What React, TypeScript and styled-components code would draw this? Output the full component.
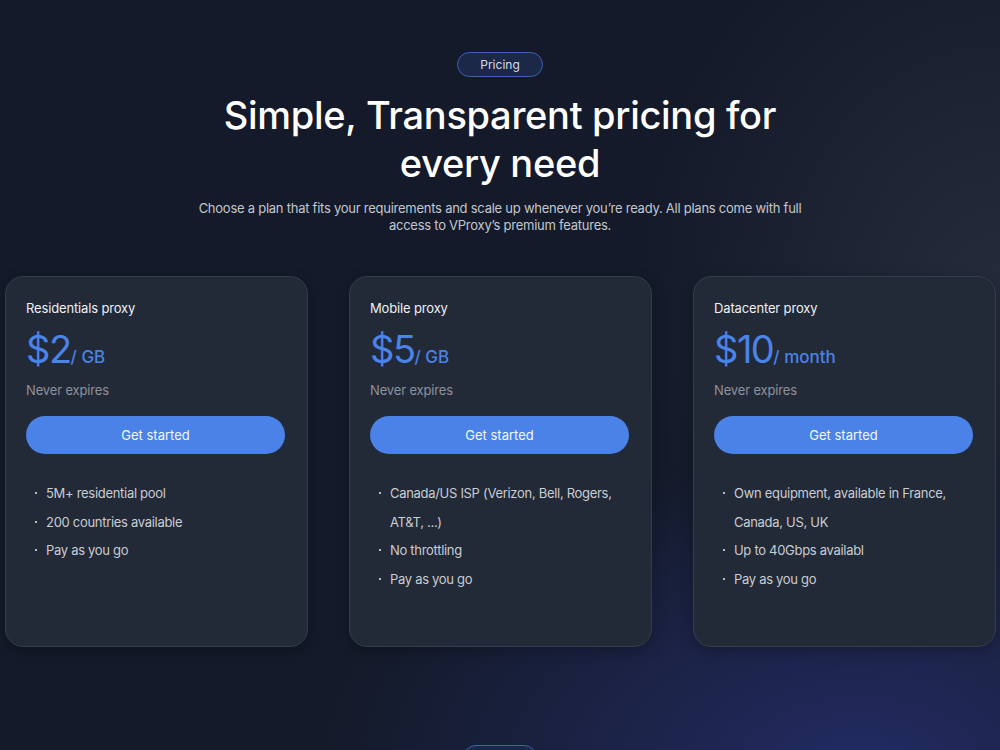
import styled, { createGlobalStyle } from "styled-components";

const GlobalStyle = createGlobalStyle`
  html, body {
    margin: 0;
    padding: 0;
    background: #141a29;
  }
  body {
    font-family: Inter, "Noto Sans", "Liberation Sans", sans-serif;
    -webkit-font-smoothing: antialiased;
  }
`;

type Plan = {
	name: string;
	price: string;
	unit: string;
	features: string[];
};

const plans: Plan[] = [
	{
		name: "Residentials proxy",
		price: "$2",
		unit: "/ GB",
		features: ["5M+ residential pool", "200 countries available", "Pay as you go"],
	},
	{
		name: "Mobile proxy",
		price: "$5",
		unit: "/ GB",
		features: [
			"Canada/US ISP (Verizon, Bell, Rogers, AT&T, ...)",
			"No throttling",
			"Pay as you go",
		],
	},
	{
		name: "Datacenter proxy",
		price: "$10",
		unit: "/ month",
		features: [
			"Own equipment, available in France, Canada, US, UK",
			"Up to 40Gbps availabl",
			"Pay as you go",
		],
	},
];

const Page = styled.div`
  min-height: 750px;
  overflow: hidden;
  background:
    radial-gradient(ellipse 540px 320px at 860px 770px, rgba(36, 46, 108, 0.85), transparent 100%),
    radial-gradient(ellipse 360px 420px at 1000px 300px, rgba(52, 58, 74, 0.55), transparent 100%),
    #141a29;
`;

const Section = styled.section`
  display: flex;
  flex-direction: column;
  align-items: center;
  padding-top: 52px;
`;

const Tag = styled.div`
  box-sizing: border-box;
  height: 25px;
  padding: 0 22px;
  display: flex;
  align-items: center;
  border: 1px solid #3f62b4;
  background: #1b2848;
  border-radius: 13px;
  color: #d5dbe8;
  font-size: 12px;
`;

const Heading = styled.h1`
  margin: 14px 0 0;
  width: 600px;
  text-align: center;
  color: #ffffff;
  font-size: 38px;
  font-weight: 500;
  line-height: 48px;
  letter-spacing: -0.3px;
`;

const Lead = styled.p`
  margin: 13px 0 0;
  width: 640px;
  text-align: center;
  color: #c3c7cf;
  font-size: 13px;
  line-height: 16.5px;
  letter-spacing: -0.25px;
`;

const Grid = styled.div`
  box-sizing: border-box;
  width: 100%;
  margin-top: 43px;
  padding: 0 4px 0 5px;
  display: grid;
  grid-template-columns: repeat(3, 1fr);
  gap: 41px;
`;

const Card = styled.div`
  box-sizing: border-box;
  height: 371px;
  padding: 22px 20px 0 20px;
  background: #222937;
  border: 1px solid #363d4a;
  border-radius: 18px;
  box-shadow: 0 4px 14px rgba(0, 0, 0, 0.25);
`;

const PlanName = styled.div`
  color: #eef0f4;
  font-size: 13px;
  line-height: 18px;
  letter-spacing: -0.15px;
`;

const PriceRow = styled.div`
  margin-top: 8px;
  display: flex;
  align-items: baseline;
  color: #4a84e8;
`;

const Amount = styled.span`
  font-size: 38px;
  line-height: 48px;
  letter-spacing: -1.5px;
`;

const Unit = styled.span`
  font-size: 17px;
  font-weight: 500;
`;

const Expiry = styled.div`
  margin-top: 8px;
  color: #8d929c;
  font-size: 13px;
  line-height: 18px;
  letter-spacing: -0.15px;
`;

const StartButton = styled.button`
  margin-top: 17px;
  width: 259px;
  height: 38px;
  border: none;
  border-radius: 19px;
  background: #4a82e8;
  color: #f4f7ff;
  font-family: inherit;
  font-size: 13px;
  cursor: pointer;
`;

const Features = styled.ul`
  margin: 25px 0 0;
  padding: 0 0 0 9px;
  list-style: none;
  width: 245px;
`;

const Feature = styled.li`
  position: relative;
  padding-left: 11px;
  color: #c9cdd4;
  font-size: 13px;
  line-height: 28.5px;
  letter-spacing: -0.3px;

  &::before {
    content: "";
    position: absolute;
    left: 0;
    top: 13px;
    width: 2px;
    height: 2px;
    background: #b8bcc4;
  }
`;

const Footer = styled.div`
  display: flex;
  justify-content: center;
  margin-top: 98px;
`;

const NextTag = styled.div`
  width: 72px;
  height: 24px;
  border: 1px solid #3f62b4;
  background: #1b2848;
  border-radius: 13px;
`;

export default function App() {
	return (
		<>
			<GlobalStyle />
			<Page>
				<Section>
					<Tag>Pricing</Tag>
					<Heading>Simple, Transparent pricing for every need</Heading>
					<Lead>
						Choose a plan that fits your requirements and scale up whenever you’re
						ready. All plans come with full access to VProxy’s premium features.
					</Lead>
					<Grid>
						{plans.map((plan) => (
							<Card key={plan.name}>
								<PlanName>{plan.name}</PlanName>
								<PriceRow>
									<Amount>{plan.price}</Amount>
									<Unit>{plan.unit}</Unit>
								</PriceRow>
								<Expiry>Never expires</Expiry>
								<StartButton>Get started</StartButton>
								<Features>
									{plan.features.map((f) => (
										<Feature key={f}>{f}</Feature>
									))}
								</Features>
							</Card>
						))}
					</Grid>
				</Section>
				<Footer>
					<NextTag />
				</Footer>
			</Page>
		</>
	);
}
